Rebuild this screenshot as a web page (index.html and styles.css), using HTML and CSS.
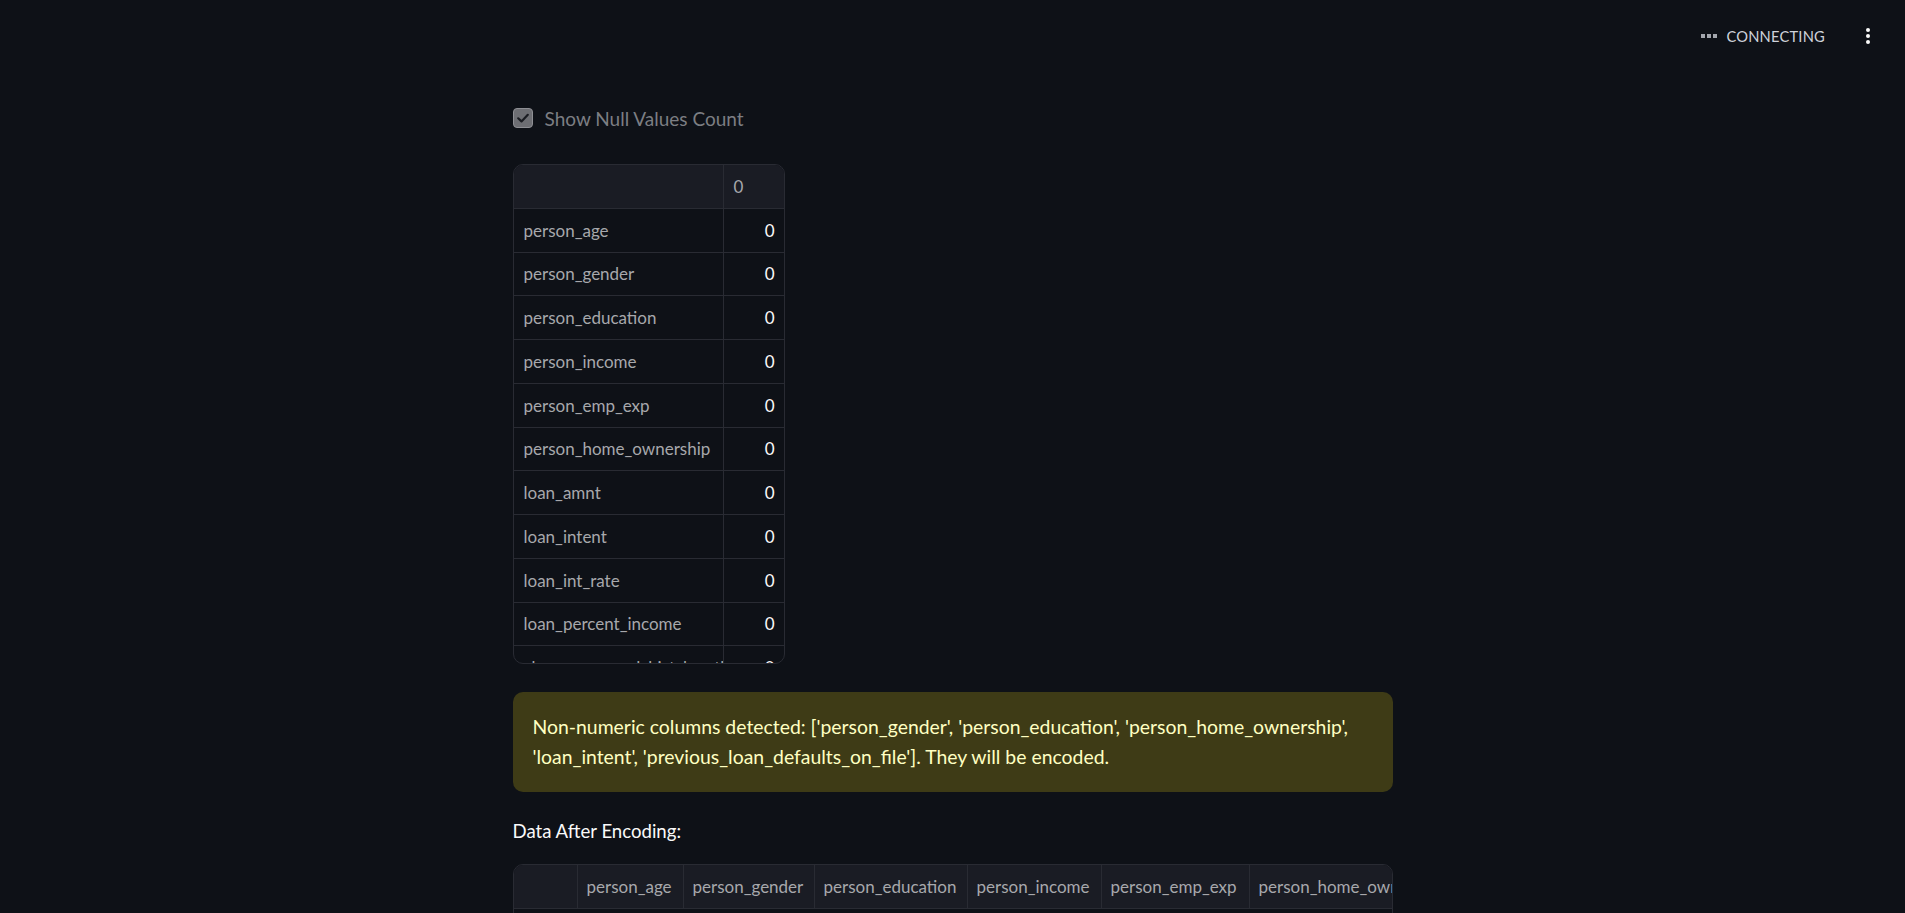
FILE: index.html
```html
<!DOCTYPE html>
<html lang="en">
<head>
<meta charset="utf-8">
<title>App</title>
<link rel="stylesheet" href="styles.css">
</head>
<body>
<header class="topbar">
  <div class="status">
    <span class="status-dots"><i></i><i></i><i></i></span>
    <span class="status-text">CONNECTING</span>
  </div>
  <button class="menu" aria-label="Main menu">
    <svg width="6" height="18" viewBox="0 0 6 18"><circle cx="3" cy="3" r="2" fill="#fafafa"/><circle cx="3" cy="9" r="2" fill="#fafafa"/><circle cx="3" cy="15" r="2" fill="#fafafa"/></svg>
  </button>
</header>
<main class="main">
  <label class="checkbox">
    <span class="box">
      <svg width="16" height="16" viewBox="0 0 16 16"><path d="M3.2 8.3 L6.5 11.4 L12.8 4.8" fill="none" stroke="#1a1c22" stroke-width="2.2" stroke-linecap="round" stroke-linejoin="round"/></svg>
    </span>
    <span class="checkbox-label">Show Null Values Count</span>
  </label>

  <div class="grid grid-null">
    <div class="row head"><div class="cell c-idx"></div><div class="cell c-val head-val">0</div></div>
    <div class="row"><div class="cell c-idx">person_age</div><div class="cell c-val">0</div></div>
    <div class="row"><div class="cell c-idx">person_gender</div><div class="cell c-val">0</div></div>
    <div class="row"><div class="cell c-idx">person_education</div><div class="cell c-val">0</div></div>
    <div class="row"><div class="cell c-idx">person_income</div><div class="cell c-val">0</div></div>
    <div class="row"><div class="cell c-idx">person_emp_exp</div><div class="cell c-val">0</div></div>
    <div class="row"><div class="cell c-idx">person_home_ownership</div><div class="cell c-val">0</div></div>
    <div class="row"><div class="cell c-idx">loan_amnt</div><div class="cell c-val">0</div></div>
    <div class="row"><div class="cell c-idx">loan_intent</div><div class="cell c-val">0</div></div>
    <div class="row"><div class="cell c-idx">loan_int_rate</div><div class="cell c-val">0</div></div>
    <div class="row"><div class="cell c-idx">loan_percent_income</div><div class="cell c-val">0</div></div>
    <div class="row"><div class="cell c-idx">cb_person_cred_hist_length</div><div class="cell c-val">0</div></div>
  </div>

  <div class="alert">
    Non-numeric columns detected: ['person_gender', 'person_education', 'person_home_ownership', 'loan_intent', 'previous_loan_defaults_on_file']. They will be encoded.
  </div>

  <p class="section-title">Data After Encoding:</p>

  <div class="grid grid-enc">
    <div class="row head">
      <div class="cell e0"></div>
      <div class="cell e1">person_age</div>
      <div class="cell e2">person_gender</div>
      <div class="cell e3">person_education</div>
      <div class="cell e4">person_income</div>
      <div class="cell e5">person_emp_exp</div>
      <div class="cell e6">person_home_ownership</div>
    </div>
  </div>
</main>
</body>
</html>
```

FILE: styles.css
```css
* { box-sizing: border-box; }
html, body {
  margin: 0;
  padding: 0;
  background: #0e1117;
  height: 913px;
  overflow: hidden;
}
body {
  font-family: "Lato", "Source Sans Pro", "Noto Sans", sans-serif;
  color: #fafafa;
}
.topbar {
  height: 72px;
  display: flex;
  align-items: center;
  justify-content: flex-end;
  padding-right: 30px;
}
.status {
  display: flex;
  align-items: center;
  gap: 9px;
  margin-right: 36px;
}
.status-dots { display: flex; gap: 2px; }
.status-dots i {
  display: block;
  width: 4px;
  height: 4px;
  background: #a3a6ad;
}
.status-text {
  font-size: 14.7px;
  color: #cfd3db;
  letter-spacing: 0.2px;
}
.menu {
  background: none;
  border: 0;
  padding: 0;
  width: 14px;
  height: 24px;
  display: flex;
  align-items: center;
  justify-content: center;
}
.main {
  width: 880px;
  margin: 0 auto;
}
.checkbox {
  margin-top: 31px;
  height: 30px;
  display: flex;
  align-items: center;
  gap: 12px;
}
.box {
  width: 20px;
  height: 20px;
  border-radius: 4px;
  background: #6d6e73;
  border: 1px solid #8e8f94;
  display: flex;
  align-items: center;
  justify-content: center;
}
.checkbox-label {
  font-size: 19px;
  color: #7c7e83;
}
.grid {
  border: 1px solid #292b33;
  border-radius: 10px;
  overflow: hidden;
  font-size: 17px;
}
.grid-null {
  margin-top: 31px;
  width: 272px;
  height: 500px;
}
.row {
  display: flex;
  height: 43.75px;
  border-bottom: 1px solid #292b33;
}
.row.head { background: #1a1c24; }
.cell {
  flex: none;
  display: flex;
  align-items: center;
  padding: 0 10px;
  white-space: nowrap;
  overflow: hidden;
  border-right: 1px solid #292b33;
}
.c-idx { width: 210px; color: #a7a8ac; }
.c-val { width: 61px; justify-content: flex-end; color: #fafafa; border-right: 0; }
.c-val.head-val { justify-content: flex-start; color: #a7a8ac; }
.alert {
  margin-top: 28px;
  background: #3e3b16;
  color: #ffffc2;
  border-radius: 10px;
  padding: 20px 20px 20px 20px;
  font-size: 19.4px;
  line-height: 30px;
}
.section-title {
  margin: 24px 0 0;
  font-size: 18.6px;
  line-height: 30px;
  color: #fafafa;
}
.grid-enc {
  margin-top: 18px;
  width: 880px;
  height: 60px;
}
.grid-enc .row { width: 1200px; }
.grid-enc .head .cell { color: #a7a8ac; padding-left: 9px; }
.e0 { width: 64px; }
.e1 { width: 106px; }
.e2 { width: 131px; }
.e3 { width: 153px; }
.e4 { width: 134px; }
.e5 { width: 148px; }
.e6 { width: 200px; }
```
